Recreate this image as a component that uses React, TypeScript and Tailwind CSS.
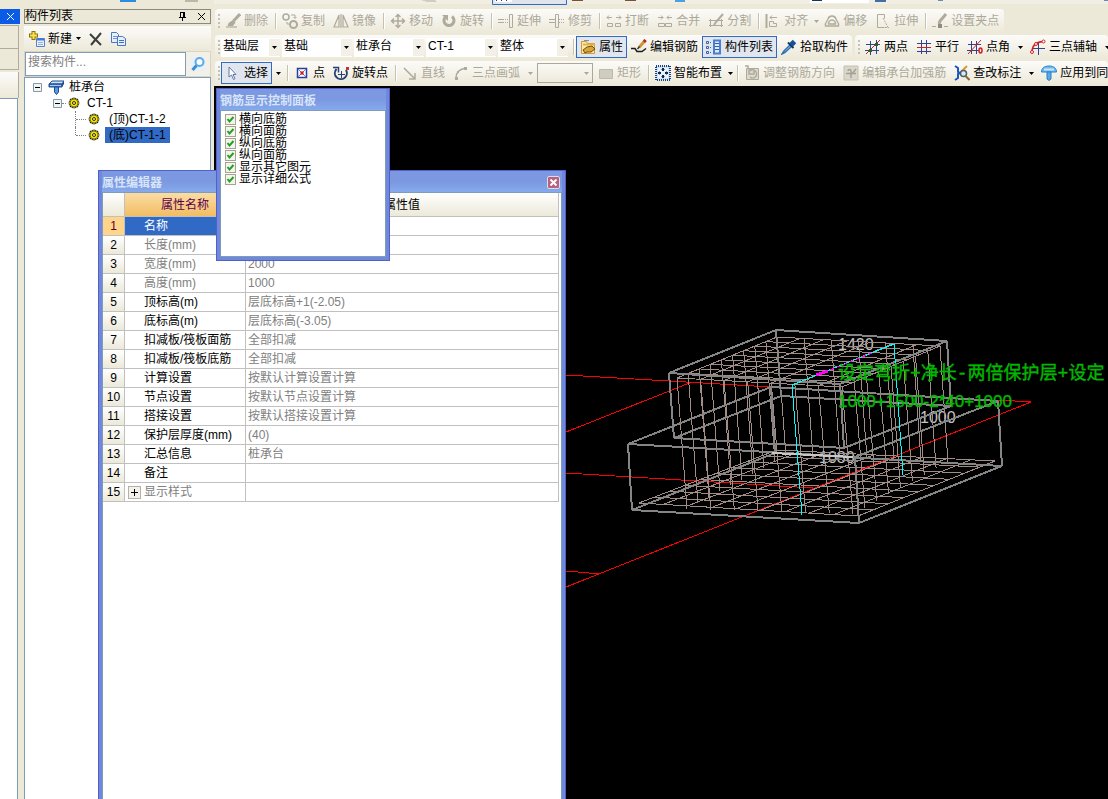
import { useState, type ReactNode } from "react";

const GREY = "#aeab9c";

const ICONS: Record<string, ReactNode> = {
  brush: (
    <>
      <path d="M15 1 8.500 8" stroke={GREY} strokeWidth="3" />
      <path d="M8 7l2.500 2.500-3 4L1 14c2-1 2-2 2.500-4z" fill={GREY} />
      <path d="M1 14h11" stroke="#c9c6b8" strokeWidth="2" />
    </>
  ),
  copy: (
    <>
      <circle cx="4" cy="4" r="3" stroke={GREY} strokeWidth="1.500" />
      <circle cx="11.500" cy="11.500" r="3.500" stroke={GREY} strokeWidth="2" />
      <path d="M5 9v2h2M9 2h4v3M11.500 4l1.500 1.500L14.500 4" stroke={GREY} />
    </>
  ),
  mirror: <path d="M6 2v12H1zM10 2v12h5zM8 1v14" stroke={GREY} strokeWidth="1.200" />,
  move: (
    <path
      d="M8 2v12M2 8h12M5.500 4 8 1.500 10.500 4M5.500 12 8 14.500 10.500 12M4 5.500 1.500 8 4 10.500M12 5.500 14.500 8 12 10.500"
      stroke={GREY}
      strokeWidth="1.500"
    />
  ),
  rotate: (
    <>
      <path d="M4 4.500a5 5 0 1 0 7-1" stroke={GREY} strokeWidth="3" />
      <path d="M1 2h6v6z" fill={GREY} />
    </>
  ),
  extend: (
    <>
      <path d="M0 6.500h6M0 9.500h6M11.500 1.500h3v13h-3z" stroke={GREY} />
      <path d="M7 6.500h4M7 9.500h4" stroke={GREY} strokeDasharray="1 1" />
    </>
  ),
  trim: (
    <>
      <path d="M0 6.500h6M0 9.500h6M6.500 1.500h3v13h-3z" stroke={GREY} />
      <path d="M10 6.500h6M10 9.500h6" stroke={GREY} strokeDasharray="1 1" />
    </>
  ),
  split: (
    <>
      <path d="M6 4.500H1m2-2-2 2 2 2M10 4.500h5m-2-2 2 2-2 2" stroke={GREY} />
      <path d="M1.500 10.500h5v3h-5zM9.500 10.500h5v3h-5z" stroke={GREY} />
    </>
  ),
  merge: (
    <>
      <path d="M1 4.500h5m-2-2 2 2-2 2M15 4.500h-5m2-2-2 2 2 2" stroke={GREY} />
      <path d="M1.500 10.500h6v3h-6zM8.500 10.500h6v3h-6z" stroke={GREY} />
    </>
  ),
  divide: (
    <>
      <path d="M1 7.500h14M1 12.500h14M2.500 6v8M13.500 6v8" stroke={GREY} />
      <path d="M15 1 8 9l-2 3" stroke={GREY} strokeWidth="2" />
    </>
  ),
  align: (
    <>
      <path d="M1.500 1v14" stroke={GREY} strokeWidth="2" />
      <path d="M5 4.500h7M5 4.500l2-2M5 4.500l2 2M4.500 8.500h4v2h3v3h-7z" stroke={GREY} />
    </>
  ),
  offset: (
    <>
      <path d="M1.500 13c-1-4 2-4 2.500-7C5 2 11 2 12 6c.5 3 3.500 3 2.500 7z" stroke={GREY} strokeWidth="1.300" />
      <path d="M4.500 11c0-2 1.500-4 3.500-4s3.500 2 3.500 4z" stroke={GREY} strokeWidth="1.500" />
    </>
  ),
  stretch: (
    <>
      <path d="M2.500 1.500h7v4M2.500 1.500v13h7" stroke={GREY} />
      <path d="M8 5l5 9.500M10 14.500h4" stroke={GREY} strokeDasharray="2 1" />
    </>
  ),
  grip: (
    <>
      <path d="M14 1 8 8l-1 3" stroke={GREY} strokeWidth="3" />
      <path d="M0 13.500h4M12 13.500h4" stroke={GREY} />
      <path d="M6 11h4v4H6z" fill="#8f8c80" />
    </>
  ),
  props: (
    <>
      <path d="M1.500 2.500h5l1 2h7v10h-13z" fill="#fbe9b0" stroke="#d9962c" />
      <path d="M3 5.500h12" stroke="#e6b23c" strokeWidth="2" />
      <path d="M3 11l4-3 5-1 3 3-4 3H7l-2 1z" fill="#d6a738" stroke="#6b4d10" />
      <path d="M4 1.500h5" stroke="#6c8fd0" />
    </>
  ),
  editBar: (
    <>
      <path d="M0 9.500h4l2 3h5l4-3" stroke="#1b1b1b" strokeWidth="1.500" />
      <path d="M14.500 1 8 8.500" stroke="#d0943a" strokeWidth="3" />
      <path d="M14.500 1 13 3" stroke="#b3302b" strokeWidth="3" />
      <path d="M8.500 7.500 6.500 10" stroke="#3a3a3a" strokeWidth="1.500" />
    </>
  ),
  list: (
    <>
      <path d="M.5 2.500h2v2h-2zM.5 7.500h2v2h-2zM.5 12.500h2v2h-2z" stroke="#3b63a8" />
      <path d="M4 3.500h2M4 8.500h2M4 13.500h2" stroke="#3b63a8" strokeDasharray="1 1" />
      <path d="M8 1.500h6v13H8z" fill="#dce9fb" stroke="#4a7fd0" strokeWidth="2" />
      <path d="M9 4.500h4M9 7.500h4M9 10.500h4" stroke="#2f5eae" />
    </>
  ),
  dropper: (
    <>
      <path d="M9 6 3 12l-2 3 3-1.500L10.500 7.500" fill="#bfe2fa" stroke="#2b6fb5" strokeWidth="1.500" />
      <path d="M7 3.500 12.500 9" stroke="#15335e" strokeWidth="2" />
      <path d="M10 6l3.500-3.500" stroke="#1d4f94" strokeWidth="5" />
    </>
  ),
  twoPoint: (
    <>
      <path d="M5.500 2v14M11.500 1v14M1 5.500h14M0 11.500h14" stroke="#32428f" />
      <path d="M1 15 15 1" stroke="#d32020" />
      <path d="M4 10h3v3H4zM10 4h3v3h-3z" fill="#1f6a24" />
    </>
  ),
  parallel: (
    <>
      <path d="M5.500 1v14M10.500 1v14M1 4.500h14M1 12.500h14" stroke="#32428f" />
      <path d="M1 8.500h14" stroke="#d32020" />
    </>
  ),
  angle: (
    <>
      <path d="M4.500 2v13M9.500 2v13M1 5.500h13M0 11.500h12" stroke="#32428f" />
      <path d="M1 15 14 1" stroke="#d32020" />
      <ellipse cx="13.500" cy="11.500" rx="1.500" ry="2.500" stroke="#d32020" strokeWidth="1.500" />
    </>
  ),
  arcAxis: (
    <>
      <path d="M8.500 4v12M3 9.500h12" stroke="#32428f" />
      <path d="M2 13C2 6 6 3 13 2.500" stroke="#d32020" strokeWidth="1.500" />
      <circle cx="2" cy="13" r="1.500" fill="#fff" stroke="#d32020" />
      <circle cx="6" cy="5" r="1.500" fill="#fff" stroke="#d32020" />
      <circle cx="13.500" cy="2.500" r="1.500" fill="#fff" stroke="#d32020" />
    </>
  ),
  pointer: <path d="M4 2v10l2.500-2 2 4.500 1.500-.8L8 9.500h3z" fill="#fff" stroke="#5f7ba8" />,
  point: (
    <>
      <path d="M3.500 3.500h9v9h-9z" fill="#fff" stroke="#2540a0" strokeWidth="1.500" />
      <path d="M4 4l8 8M12 4l-8 8" stroke="#6a83c8" />
      <path d="M6.500 6.500l3 3M9.500 6.500l-3 3" stroke="#d31818" strokeWidth="1.500" />
    </>
  ),
  rotatePoint: (
    <>
      <path d="M3.500 4a6 6 0 1 0 9.500 1" stroke="#274276" strokeWidth="2" />
      <path d="M0 2.500h5.500v5" stroke="#274276" strokeWidth="1.500" />
      <path d="M8.500 6v7M5 9.500h7" stroke="#274276" />
      <path d="M13 2h3v3h-3z" fill="#c2352c" />
    </>
  ),
  line: <path d="M2 3l10 10M13 8v6H7" stroke={GREY} strokeWidth="1.500" />,
  arc: (
    <>
      <path d="M3 13C3 7 7 4 13 3" stroke={GREY} strokeWidth="1.500" />
      <path d="M2 12h3v3H2zM11 2h3v3h-3zM4 6h2v2H4z" fill={GREY} />
    </>
  ),
  rect: <path d="M1.500 4.500h13v9h-13z" fill="#cfccc0" stroke="#bdbaad" />,
  smart: (
    <>
      <path d="M1 1h14v14H1z" fill="#cfe2f7" stroke="#1d3f7a" strokeWidth="2" strokeDasharray="1 1" />
      <path d="M3 3h10v10H3z" fill="#eaf3fd" />
      <path d="M8 3v3M8 10v3M3 8h3M10 8h3" stroke="#14284e" strokeWidth="2" />
      <path d="M6 5l2-2 2 2zM6 11l2 2 2-2zM5 6 3 8l2 2zM11 6l2 2-2 2z" fill="#14284e" />
    </>
  ),
  direction: (
    <>
      <path d="M2.500 3.500h12v11h-12z" fill="#dcd9cd" stroke={GREY} />
      <path d="M1 1h3v3M6 12a4 4 0 1 0 0-6M10 4H5v5h5V6" stroke={GREY} strokeWidth="1.500" />
    </>
  ),
  reinforce: (
    <>
      <path d="M1 1h14v14H1z" fill="#d9d6ca" stroke="#c4c1b4" />
      <path d="M3 8.500h10M8 13V6c0-2-3-2-3 0M13 4l-4 5" stroke="#a5a295" strokeWidth="1.500" />
    </>
  ),
  check: (
    <>
      <path d="M1 1l3 2v4l2 1-2 1v4l-3 2" stroke="#1f55c0" strokeWidth="2" />
      <path d="M13 1 7 7" stroke="#d89a2b" strokeWidth="2" />
      <circle cx="9.500" cy="8.500" r="3" fill="#d4ecfb" stroke="#4f5d6e" strokeWidth="1.500" />
      <path d="M11.500 11l4 4" stroke="#8d6a33" strokeWidth="2" />
    </>
  ),
  apply: (
    <>
      <path d="M.5 7c0-3 2-6 7.500-6s7.500 3 7.500 6z" fill="#6dbcf2" stroke="#2c7fc4" />
      <path d="M3 4.500h10" stroke="#c4e6fb" strokeWidth="2" />
      <path d="M6 7h4v7l-2 1.500L6 14z" fill="#58aae8" stroke="#2c7fc4" />
    </>
  ),
  gear: (
    <>
      <path
        d="M8 2.500v11M2.500 8h11M4 4l8 8M12 4l-8 8M6 3l4 10M10 3 6 13M3 6l10 4M3 10l10-4"
        stroke="#2c2a00"
        strokeWidth="1.200"
      />
      <circle cx="8" cy="8" r="4" fill="#f7e600" stroke="#7a7400" />
      <circle cx="8" cy="8" r="1.500" fill="#fff89a" stroke="#2c2a00" />
    </>
  ),
  cap: (
    <>
      <path d="M1 5l3-3h12l-2 3z" fill="#cfe3fa" stroke="#1c4a8c" />
      <path d="M1 5h13v3H1z" fill="#3b7fcf" stroke="#1c4a8c" />
      <path d="M2 6.500h11" stroke="#a8cdf5" />
      <path d="M14 5l2-3v3l-2 3z" fill="#1c4a8c" />
      <path d="M6.500 8h4v5l-2 2.500-2-2.500z" fill="#5a9be0" stroke="#1c4a8c" />
    </>
  ),
  newItem: (
    <>
      <path d="M4.500 0v9M0 4.500h9" stroke="#8a7410" strokeWidth="4" />
      <path d="M4.500 1v7M1 4.500h7" stroke="#ffe14a" strokeWidth="2" />
      <path d="M7.500 7.500h8v8h-8z" fill="#e8f1fd" stroke="#5b7fc0" />
      <path d="M8 8.500h7" stroke="#3f78d8" strokeWidth="2" />
      <path d="M9 11.500h5M9 13.500h5" stroke="#8fb0e2" />
    </>
  ),
  remove: <path d="M2 3l11 11M13 2 3 14" stroke="#3b3e3c" strokeWidth="2" />,
  duplicate: (
    <>
      <path d="M1.500 1.500h5l2 2v8h-7z" fill="#e6f0fd" stroke="#4d76bd" />
      <path d="M3 5.500h4M3 7.500h4" stroke="#6f96d6" />
      <path d="M7.500 5.500h5l3 2v7h-8z" fill="#e6f0fd" stroke="#4d76bd" />
      <path d="M9 9.500h5M9 11.500h5" stroke="#3f6fc4" />
    </>
  ),
  search: (
    <>
      <path d="M1 1h14v14H1z" fill="#e3f1fb" />
      <circle cx="9.500" cy="6" r="4" fill="#f6fbff" stroke="#5fa9e6" strokeWidth="2" />
      <path d="M6.500 9.500 2.500 14" stroke="#3f8bd2" strokeWidth="3" />
    </>
  ),
};

function Icon({ name }: { name: string }) {
  return (
    <svg viewBox="0 0 16 16" fill="none" className="size-4 shrink-0" aria-hidden="true">
      {ICONS[name]}
    </svg>
  );
}

function Tool({ icon, label, off, on }: { icon: string; label: string; off?: boolean; on?: boolean }) {
  return (
    <button
      type="button"
      disabled={off}
      className={`flex h-[22px] shrink-0 items-center gap-[3px] whitespace-nowrap border px-[3px] ${
        on ? "border-[#316ac5] bg-[#e1e6ee]" : "border-transparent"
      } ${off ? "text-[#aca899]" : "text-black"}`}
    >
      <Icon name={icon} />
      {label}
    </button>
  );
}

function Sep() {
  return <span className="ml-[3px] mr-px h-4 w-0.5 shrink-0 border-l border-r border-l-[#c5c2b2] border-r-white" />;
}

function Caret({ wide, off }: { wide?: boolean; off?: boolean }) {
  return (
    <span className={`flex shrink-0 justify-center ${wide ? "w-3" : "w-2"} ${off ? "text-[#aca899]" : "text-black"}`}>
      <svg viewBox="0 0 5 3" className="h-[3px] w-[5px]" fill="currentColor" aria-hidden="true">
        <path d="M0 0h5L2.500 3z" />
      </svg>
    </span>
  );
}

function Bar({ children, grow }: { children: ReactNode; grow?: boolean }) {
  return (
    <div
      className={`flex h-6 items-center rounded bg-linear-to-b from-[#fcfbf9] to-[#ece9d8] pl-[3px] ${
        grow ? "min-w-0 flex-1 overflow-hidden" : "shrink-0"
      }`}
    >
      <span className="flex h-4 w-[3px] shrink-0 flex-col justify-between py-px">
        <i className="size-0.5 bg-[#c5c2b5]" />
        <i className="size-0.5 bg-[#c5c2b5]" />
        <i className="size-0.5 bg-[#c5c2b5]" />
        <i className="size-0.5 bg-[#c5c2b5]" />
      </span>
      {children}
    </div>
  );
}

function Combo({ value, label, first }: { value: string; label: string; first?: boolean }) {
  return (
    <div className={`mr-0.5 grid h-[19px] shrink-0 items-center bg-white ${first ? "w-[59px]" : "w-[70px]"}`}>
      <select
        aria-label={label}
        defaultValue={value}
        className="h-full w-full appearance-none bg-transparent pb-0.5 pl-0.5 leading-[17px] [grid-area:1/1]"
      >
        <option>{value}</option>
      </select>
      <span className="pointer-events-none flex h-[17px] w-[11px] items-center justify-center justify-self-end bg-[#f3f1e7] [grid-area:1/1]">
        <Caret />
      </span>
    </div>
  );
}

function Toolbars() {
  return (
    <div className="flex flex-col gap-0.5 overflow-hidden pb-px pl-1">
      <div className="flex">
        <Bar>
          <div className="flex items-center pr-px">
            <Tool icon="brush" label="删除" off />
            <Sep />
            <Tool icon="copy" label="复制" off />
            <Tool icon="mirror" label="镜像" off />
            <Sep />
            <Tool icon="move" label="移动" off />
            <Tool icon="rotate" label="旋转" off />
            <Sep />
            <Tool icon="extend" label="延伸" off />
            <Tool icon="trim" label="修剪" off />
            <Sep />
            <Tool icon="split" label="打断" off />
            <Tool icon="merge" label="合并" off />
            <Tool icon="divide" label="分割" off />
            <Sep />
            <Tool icon="align" label="对齐" off />
            <Caret off />
            <Tool icon="offset" label="偏移" off />
            <Tool icon="stretch" label="拉伸" off />
            <Sep />
            <Tool icon="grip" label="设置夹点" off />
          </div>
        </Bar>
      </div>

      <div className="flex gap-[3px]">
        <Bar>
          <Combo value="基础层" label="楼层" first />
          <Combo value="基础" label="构件类型" />
          <Combo value="桩承台" label="构件" />
          <Combo value="CT-1" label="名称" />
          <Combo value="整体" label="单元" />
          <Sep />
          <Tool icon="props" label="属性" on />
          <Tool icon="editBar" label="编辑钢筋" />
          <Tool icon="list" label="构件列表" on />
          <Tool icon="dropper" label="拾取构件" />
        </Bar>
        <Bar grow>
          <Tool icon="twoPoint" label="两点" />
          <Tool icon="parallel" label="平行" />
          <Tool icon="angle" label="点角" />
          <Caret wide />
          <Tool icon="arcAxis" label="三点辅轴" />
          <Caret wide />
        </Bar>
      </div>

      <div className="flex">
        <Bar grow>
          <Tool icon="pointer" label="选择" on />
          <Caret wide />
          <Sep />
          <Tool icon="point" label="点" />
          <Tool icon="rotatePoint" label="旋转点" />
          <Sep />
          <Tool icon="line" label="直线" off />
          <Tool icon="arc" label="三点画弧" off />
          <Caret wide off />
          <div className="mx-px grid h-5 w-14 shrink-0 items-center border border-[#aca899]">
            <select aria-label="画弧方式" disabled className="h-full w-full appearance-none opacity-0 [grid-area:1/1]" />
            <span className="pointer-events-none mr-0.5 justify-self-end [grid-area:1/1]">
              <Caret off />
            </span>
          </div>
          <Tool icon="rect" label="矩形" off />
          <Sep />
          <Tool icon="smart" label="智能布置" />
          <Caret />
          <Sep />
          <Tool icon="direction" label="调整钢筋方向" off />
          <Tool icon="reinforce" label="编辑承台加强筋" off />
          <Tool icon="check" label="查改标注" />
          <Caret wide />
          <Tool icon="apply" label="应用到同" />
        </Bar>
      </div>
    </div>
  );
}

// bottom edge of the toolbar that is scrolled out above
function TopEdge() {
  return (
    <svg viewBox="0 0 1108 9" preserveAspectRatio="xMinYMin slice" className="h-[9px] w-full shrink-0" fill="none" aria-hidden="true">
      <path d="M214 0h894v4H214z" fill="#f1efe3" />
      <path d="M120 0h16v2h-16z" fill="#2a8ddd" />
      <path d="M185 0h13v2h-13z" fill="#bbb8ab" />
      <path d="M421 0h14l2 2h-10z" fill="#cfccc0" />
      <path d="M492.500-1v5.500h74V-1" fill="#e1e6ee" stroke="#316ac5" />
      <path d="M495 0h17v2h-17z" fill="#fff" />
      <path d="M496 .5h15" stroke="#223a80" strokeDasharray="1 4" />
      <path d="M572 0h11v1h-11zM625 0h11v1h-11z" fill="#7a5230" />
      <path d="M675 0h10v2h-10z" fill="#4aa3e0" />
      <path d="M810 0h59v3h-59z" fill="#fff" />
      <path d="M812 0h10v1h-10z" fill="#1d3358" />
      <path d="M875 0h11v2h-11z" fill="#3f6ea8" />
      <path d="M938 0h5v1h-5zM1104 0h4v1h-4z" fill="#6b88b8" />
    </svg>
  );
}

function Toggle({ open }: { open: boolean }) {
  return (
    <svg viewBox="0 0 9 9" className="size-[9px] shrink-0" fill="none" aria-hidden="true">
      <path d="M.5.5h8v8h-8z" fill="#f5f3ec" stroke="#7b9ab8" />
      <path d={open ? "M2 4.500h5" : "M2 4.500h5M4.500 2v5"} stroke="#000" />
    </svg>
  );
}

function ComponentList() {
  return (
    <aside className="flex w-[187px] shrink-0 flex-col">
      <header className="flex h-[15px] items-center border border-[#8c8a80] leading-[13px]">
        <h2 className="flex-1">构件列表</h2>
        <button type="button" aria-label="固定" className="mr-2.5">
          <svg viewBox="0 0 9 9" className="size-[9px]" fill="none" stroke="#000">
            <path d="M2 .5h5M2.500 0v5M5.500 0v5M6.500 0v5M1 5.500h7M4.500 6v3" />
          </svg>
        </button>
        <button type="button" aria-label="关闭" className="mr-1">
          <svg viewBox="0 0 9 9" className="size-[9px]" fill="none" stroke="#000">
            <path d="M1 1l7 7M8 1 1 8" />
          </svg>
        </button>
      </header>

      <div className="mt-0.5 flex h-[25px] items-center bg-linear-to-b from-[#fcfbf9] to-[#ece9d8] pl-0.5">
        <button type="button" className="flex items-center gap-[3px] pl-[3px]">
          <Icon name="newItem" />
          <span className="flex items-center">
            新建
            <Caret wide />
          </span>
        </button>
        <button type="button" aria-label="删除" className="ml-1">
          <Icon name="remove" />
        </button>
        <button type="button" aria-label="复制" className="ml-1.5">
          <Icon name="duplicate" />
        </button>
      </div>

      <div className="flex h-[26px] border border-[#d8d5c5] bg-[#f3f1e7]">
        <input
          aria-label="搜索构件"
          placeholder="搜索构件..."
          className="w-[161px] border border-[#7f9db9] bg-white pb-1 pl-0.5 placeholder:text-[#808080]"
        />
        <button type="button" aria-label="搜索" className="flex flex-1 items-center justify-center">
          <Icon name="search" />
        </button>
      </div>

      <ul className="flex-1 border-x border-t border-[#7f9db9] bg-white pt-px leading-4">
        <li>
          <div className="flex h-4 items-center pl-2">
            <Toggle open />
            <span className="ml-1.5 mr-[5px] flex">
              <Icon name="cap" />
            </span>
            桩承台
          </div>
          <ul>
            <li>
              <div className="flex h-4 items-center pl-7">
                <Toggle open />
                <i className="w-1 border-t border-dotted border-[#808080]" />
                <span className="mr-[5px] flex">
                  <Icon name="gear" />
                </span>
                CT-1
              </div>
              <ul className="pl-[50px]">
                <li className="flex h-4 items-center">
                  <i className="h-4 w-0 border-l border-dotted border-[#808080]" />
                  <i className="w-2.5 border-t border-dotted border-[#808080]" />
                  <Icon name="gear" />
                  <span className="ml-[3px] px-1">(顶)CT-1-2</span>
                </li>
                <li className="flex h-4 items-center">
                  <i className="h-2 w-0 self-start border-l border-dotted border-[#808080]" />
                  <i className="w-2.5 border-t border-dotted border-[#808080]" />
                  <Icon name="gear" />
                  <span className="ml-[3px] bg-[#316ac5] px-1">(底)CT-1-1</span>
                </li>
              </ul>
            </li>
          </ul>
        </li>
      </ul>
    </aside>
  );
}

function lerp(a: number[], b: number[], t: number) {
  return [a[0] + (b[0] - a[0]) * t, a[1] + (b[1] - a[1]) * t];
}

// corners: left, back, right, front
const TOP = [[677, 378], [777, 337], [940, 346], [842, 387]];
const BOTTOM = [[639, 503], [777, 450], [995, 461], [858, 516]];
const FEET = [[687, 509], [786, 456], [948, 462], [853, 514]];

function seg(a: number[], b: number[]) {
  return `M${a[0].toFixed(1)} ${a[1].toFixed(1)}L${b[0].toFixed(1)} ${b[1].toFixed(1)}`;
}

function mesh(q: number[][], n: number, m: number) {
  let d = "";
  for (let i = 0; i <= n; i++) {
    d += seg(lerp(q[0], q[1], i / n), lerp(q[3], q[2], i / n));
  }
  for (let i = 0; i <= m; i++) {
    d += seg(lerp(q[0], q[3], i / m), lerp(q[1], q[2], i / m));
  }
  return d;
}

function legs(a: number, b: number, n: number) {
  let d = "";
  for (let i = 0; i <= n; i++) {
    d += seg(lerp(TOP[a], TOP[b], i / n), lerp(FEET[a], FEET[b], i / n));
  }
  return d;
}

function Model() {
  return (
    <svg
      viewBox="214 86 894 713"
      preserveAspectRatio="xMinYMin slice"
      className="absolute inset-0 h-full w-full"
      fill="none"
      aria-label="三维钢筋"
    >
      <g fill="#c4c4c4" className="font-['Liberation_Sans',sans-serif] text-[16px]">
        <text x="838" y="350">1420</text>
        <text x="920" y="423">1000</text>
        <text x="819" y="463">1080</text>
      </g>
      <g shapeRendering="crispEdges">
        <path
          stroke="#f00"
          d="M566 375L771 387M566 432L692 382M566 473L813 488M566 587L1031 402L998 400M566 571L601 574"
        />
        <g stroke="#a08e86">
          <path d={mesh(TOP, 9, 7)} />
          <path d={mesh(BOTTOM, 9, 9)} />
          <path d={legs(0, 3, 7) + legs(0, 1, 9) + legs(3, 2, 8) + legs(1, 2, 6)} />
        </g>
        <g stroke="#858585" strokeWidth="2">
          <path d="M776 330L947 341L840 384L669 373ZM781 396L951 406L844 448L674 438Z" />
          <path d="M776 330L781 396M947 341L951 406M840 384L844 448M669 373L674 438" />
          <path d="M771 387L998 401L855 457L628 444ZM775 453L1002 466L859 523L632 510Z" />
          <path d="M771 387L775 453M998 401L1002 466M855 457L859 523M628 444L632 510" />
          <path d="M772 453L853 457" stroke="#c8c8c8" />
        </g>
        <path d="M802 515L792 385L894 344L903 475" stroke="#0ff" />
        <path d="M830 370L872 353" stroke="#f0f" strokeDasharray="4 3" />
        <path d="M816 375L828 371" stroke="#f0f" strokeWidth="3" />
      </g>
      <g fill="#00b800" stroke="#00b800" strokeWidth=".4">
        <text x="838" y="379" className="font-['Liberation_Mono','Noto_Sans_CJK_SC',monospace] text-[18px]">
          设定弯折+净长-两倍保护层+设定
        </text>
        <text x="838" y="407" className="font-['Liberation_Sans',sans-serif] text-[17px]">
          1000+1500-2*40+1000
        </text>
      </g>
    </svg>
  );
}

const ROWS: { name: string; value: string; dim?: boolean; group?: boolean }[] = [
  { name: "名称", value: "" },
  { name: "长度(mm)", value: "", dim: true },
  { name: "宽度(mm)", value: "2000", dim: true },
  { name: "高度(mm)", value: "1000", dim: true },
  { name: "顶标高(m)", value: "层底标高+1(-2.05)" },
  { name: "底标高(m)", value: "层底标高(-3.05)" },
  { name: "扣减板/筏板面筋", value: "全部扣减" },
  { name: "扣减板/筏板底筋", value: "全部扣减" },
  { name: "计算设置", value: "按默认计算设置计算" },
  { name: "节点设置", value: "按默认节点设置计算" },
  { name: "搭接设置", value: "按默认搭接设置计算" },
  { name: "保护层厚度(mm)", value: "(40)" },
  { name: "汇总信息", value: "桩承台" },
  { name: "备注", value: "" },
  { name: "显示样式", value: "", dim: true, group: true },
];

function TitleBar({ title, children }: { title: string; children?: ReactNode }) {
  return (
    <div className="flex h-[21px] shrink-0 items-center justify-between bg-linear-to-b from-[#7b98e2] via-[#7b98e0] to-[#86aaee] pt-0.5">
      <h2 className="font-bold text-[#d8e4f8]">{title}</h2>
      {children}
    </div>
  );
}

function PropertyEditor() {
  return (
    <section className="absolute bottom-0 left-[98px] top-[170px] flex w-[468px] flex-col border-x border-t border-[#5360c8] bg-[#7088dc] px-[3px]">
      <TitleBar title="属性编辑器">
        <button
          type="button"
          aria-label="关闭"
          className="mr-0.5 flex size-[13px] items-center justify-center rounded-xs border border-[#d5dcf5] bg-[#b8627c]"
        >
          <svg viewBox="0 0 7 7" className="size-[7px]" stroke="#fff" strokeWidth="2">
            <path d="M.5.5l6 6M6.500.5l-6 6" />
          </svg>
        </button>
      </TitleBar>
      <div className="flex-1 border-x border-t border-[#7f9db9] bg-white pr-0.5">
        <table className="w-full table-fixed border-separate border-spacing-0 [&_td]:border-b [&_td]:border-r [&_td]:border-[#c0c0c0] [&_th]:border-b [&_th]:border-r [&_th]:border-[#c0c0c0]">
          <thead>
            <tr className="h-6">
              <th className="w-[22px] bg-linear-to-b from-white to-[#ece9d8]" />
              <th className="w-[121px] bg-linear-to-b from-[#fbdca4] to-[#f2bd62] font-normal text-[#5a0050]">属性名称</th>
              <th className="bg-linear-to-b from-white to-[#ece9d8] font-normal">属性值</th>
            </tr>
          </thead>
          <tbody>
            {ROWS.map((r, i) => (
              <tr key={r.name} className="h-[19px] leading-[18px]">
                <td
                  className={`text-center ${
                    i === 0 ? "bg-[#ffd58c] text-[#5a0020]" : "bg-linear-to-b from-white to-[#ece9d8] text-black"
                  }`}
                >
                  {i + 1}
                </td>
                <td className={i === 0 ? "bg-[#316ac5] text-white" : r.dim ? "text-[#808080]" : "text-black"}>
                  <div className="flex items-center pl-[3px]">
                    <span className="w-4">
                      {r.group && (
                        <button
                          type="button"
                          aria-label="展开"
                          className="flex size-[13px] items-center justify-center border border-[#b4b2a6] bg-[#f3f1e9]"
                        >
                          <svg viewBox="0 0 7 7" className="size-[7px]" stroke="#000">
                            <path d="M0 3.500h7M3.500 0v7" />
                          </svg>
                        </button>
                      )}
                    </span>
                    {r.name}
                  </div>
                </td>
                <td className="pl-0.5 text-[#808080]">{r.value}</td>
              </tr>
            ))}
          </tbody>
        </table>
      </div>
    </section>
  );
}

const LAYERS = ["横向底筋", "横向面筋", "纵向底筋", "纵向面筋", "显示其它图元", "显示详细公式"];

function RebarPanel() {
  const [hidden, setHidden] = useState<string[]>([]);

  const toggle = (name: string) =>
    setHidden((h) => (h.includes(name) ? h.filter((n) => n !== name) : [...h, name]));

  return (
    <section className="absolute left-[216px] top-[88px] flex h-[173px] w-[174px] flex-col border border-[#5360c8] bg-[#7088dc] px-[3px] pb-[3px]">
      <TitleBar title="钢筋显示控制面板" />
      <div className="flex flex-1 flex-col border border-[#7f9db9] bg-white pl-1 pt-0.5">
        {LAYERS.map((name) => (
          <label key={name} className="flex h-3 items-center gap-[3px] leading-3">
            <span className="grid size-[11px]">
              <input
                type="checkbox"
                checked={!hidden.includes(name)}
                onChange={() => toggle(name)}
                className="peer size-[11px] appearance-none border border-[#a5a290] bg-[#f4f3ee] [grid-area:1/1]"
              />
              <svg
                viewBox="0 0 11 11"
                className="pointer-events-none hidden size-[11px] [grid-area:1/1] peer-checked:block"
                fill="none"
                stroke="#21a121"
                strokeWidth="2"
              >
                <path d="M2.500 5l2 2.500L8.500 3" />
              </svg>
            </span>
            {name}
          </label>
        ))}
      </div>
    </section>
  );
}

export default function App() {
  return (
    <div className="relative flex min-h-screen flex-col overflow-hidden bg-[#ece9d8] font-['Liberation_Sans','Noto_Sans_CJK_SC',sans-serif] text-[12px] leading-4 text-black">
      <TopEdge />
      <div className="flex flex-1">
        <div className="mr-1 flex w-5 shrink-0 flex-col">
          <button type="button" aria-label="关闭" className="flex h-[15px] items-center justify-center bg-[#0a5be6]">
            <svg viewBox="0 0 9 9" className="size-[9px]" stroke="#fff">
              <path d="M1 1l7 7M8 1 1 8" />
            </svg>
          </button>
          <div className="mr-px mt-px h-6 border-y border-r border-[#b0ad9f]" />
          <div className="mr-px h-[21px] border-b border-r border-[#b0ad9f]" />
          <div className="mr-px mt-0.5 h-[26px] border-r border-[#b0ad9f] bg-linear-to-b from-[#fcfbf9] to-[#ece9d8]" />
          <div className="mr-0.5 flex-1 border-r border-t border-[#7f9db9] bg-white" />
        </div>

        <ComponentList />

        <main className="flex min-w-0 flex-1 flex-col">
          <Toolbars />
          <div className="relative ml-[3px] flex-1 overflow-hidden bg-black">
            <Model />
          </div>
        </main>
      </div>

      <PropertyEditor />
      <RebarPanel />
    </div>
  );
}
